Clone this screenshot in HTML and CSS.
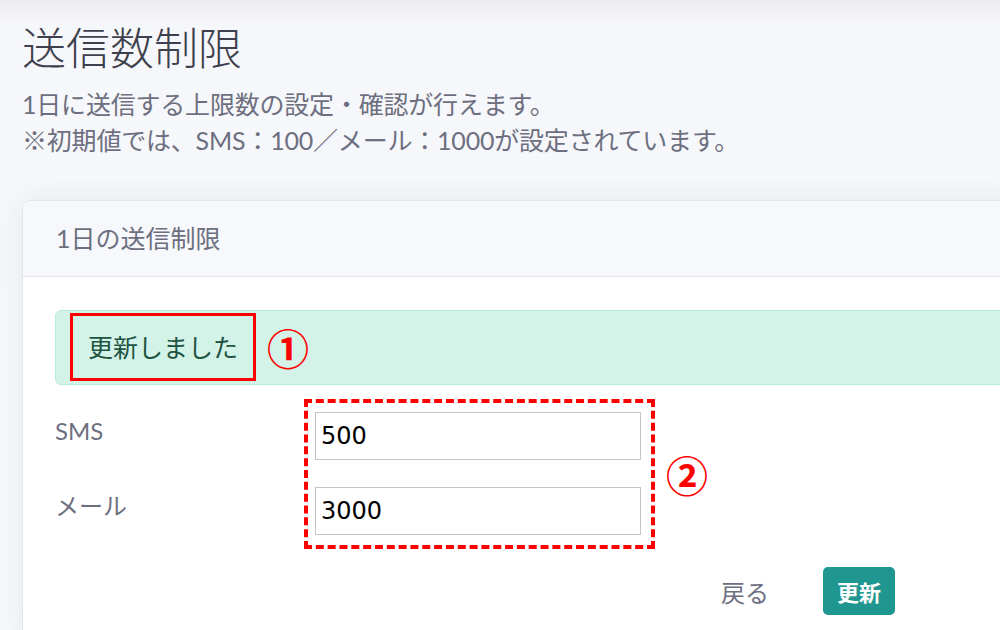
FILE: index.html
```html
<!DOCTYPE html>
<html lang="ja">
<head>
    <meta charset="UTF-8">
    <meta name="viewport" content="width=device-width, initial-scale=1.0">
    <title>送信数制限</title>
    <link rel="stylesheet" href="styles.css">
</head>
<body>
    <div class="page">
        <h1>送信数制限</h1>
        <p class="lead">1日に送信する上限数の設定・確認が行えます。<br>※初期値では、SMS：100／メール：1000が設定されています。</p>

        <div class="card">
            <div class="card-header">1日の送信制限</div>
            <div class="card-body">
                <div class="alert">
                    <span class="mark-box">更新しました</span>
                    <span class="num">①</span>
                </div>

                <div class="form-area">
                    <div class="labels">
                        <label for="sms">SMS</label>
                        <label for="mail">メール</label>
                    </div>
                    <div class="fields">
                        <input type="text" id="sms" value="500">
                        <input type="text" id="mail" value="3000">
                    </div>
                    <span class="num">②</span>
                </div>

                <div class="actions">
                    <a class="back">戻る</a>
                    <button class="btn-update">更新</button>
                </div>
            </div>
        </div>
    </div>
</body>
</html>
```

FILE: styles.css
```css
html, body {
    height: 100%;
    overflow: hidden;
}
body {
    background: linear-gradient(#ececef 0, #f6f7fa 26px, #f7f8fb 100%);
    color: #6d6f80;
    font-family: 'Lato', 'Noto Sans CJK JP', sans-serif;
    margin: 0;
    padding: 0;
}
.page {
    padding: 20px 0 0 22px;
}
h1 {
    color: #3e404d;
    font-size: 44px;
    font-weight: 300;
    line-height: 56px;
    margin: 0;
}
.lead {
    font-size: 25px;
    letter-spacing: -0.2px;
    line-height: 36px;
    margin: 10px 0 0;
}
.card {
    background-color: #fff;
    border: 1px solid #e2e4ee;
    border-radius: 8px;
    box-shadow: 0 0 28px rgba(40, 50, 90, 0.08);
    margin-top: 42px;
    width: 1000px;
    height: 440px;
}
.card-header {
    background-color: #f7f8fc;
    border-bottom: 1px solid #e2e4ee;
    border-radius: 8px 8px 0 0;
    font-size: 25px;
    height: 75px;
    line-height: 75px;
    padding-left: 33px;
}
.card-body {
    padding: 33px 0 0 32px;
}
.alert {
    align-items: center;
    background-color: #d3f3e8;
    border: 1px solid #b6eddb;
    border-radius: 6px;
    color: #1e5441;
    display: flex;
    padding: 2px 0 3px 14px;
}
.mark-box {
    border: 3px solid #ff0000;
    font-size: 25px;
    line-height: 62px;
    padding: 0 15px;
}
.num {
    color: #ff0000;
    font-family: 'Noto Sans CJK JP', sans-serif;
    font-size: 42px;
    font-weight: 700;
    line-height: 42px;
    margin-left: 11px;
}
.form-area {
    align-items: center;
    display: flex;
    margin-top: 14px;
}
.labels {
    align-self: flex-start;
    display: flex;
    flex-direction: column;
    gap: 27px;
    padding-top: 8px;
    width: 249px;
}
.labels label {
    font-size: 24px;
    line-height: 48px;
}
.fields {
    border: 4px dashed #ff0000;
    display: flex;
    flex-direction: column;
    gap: 27px;
    padding: 9px 10px 10px 7px;
}
.fields input {
    border: 1px solid #c4c4c4;
    box-sizing: border-box;
    color: #000;
    font-family: 'DejaVu Sans', sans-serif;
    font-size: 24px;
    height: 48px;
    margin: 0;
    padding: 0 5px;
    width: 326px;
}
.actions {
    align-items: center;
    display: flex;
    gap: 54px;
    margin-top: 18px;
    padding-left: 666px;
}
.back {
    color: #6d6f80;
    font-size: 24px;
}
.btn-update {
    background-color: #1f9690;
    border: none;
    border-radius: 5px;
    color: #fff;
    font-family: 'Noto Sans CJK JP', sans-serif;
    font-size: 22px;
    font-weight: 700;
    height: 48px;
    padding: 0;
    white-space: nowrap;
    width: 72px;
}
```
